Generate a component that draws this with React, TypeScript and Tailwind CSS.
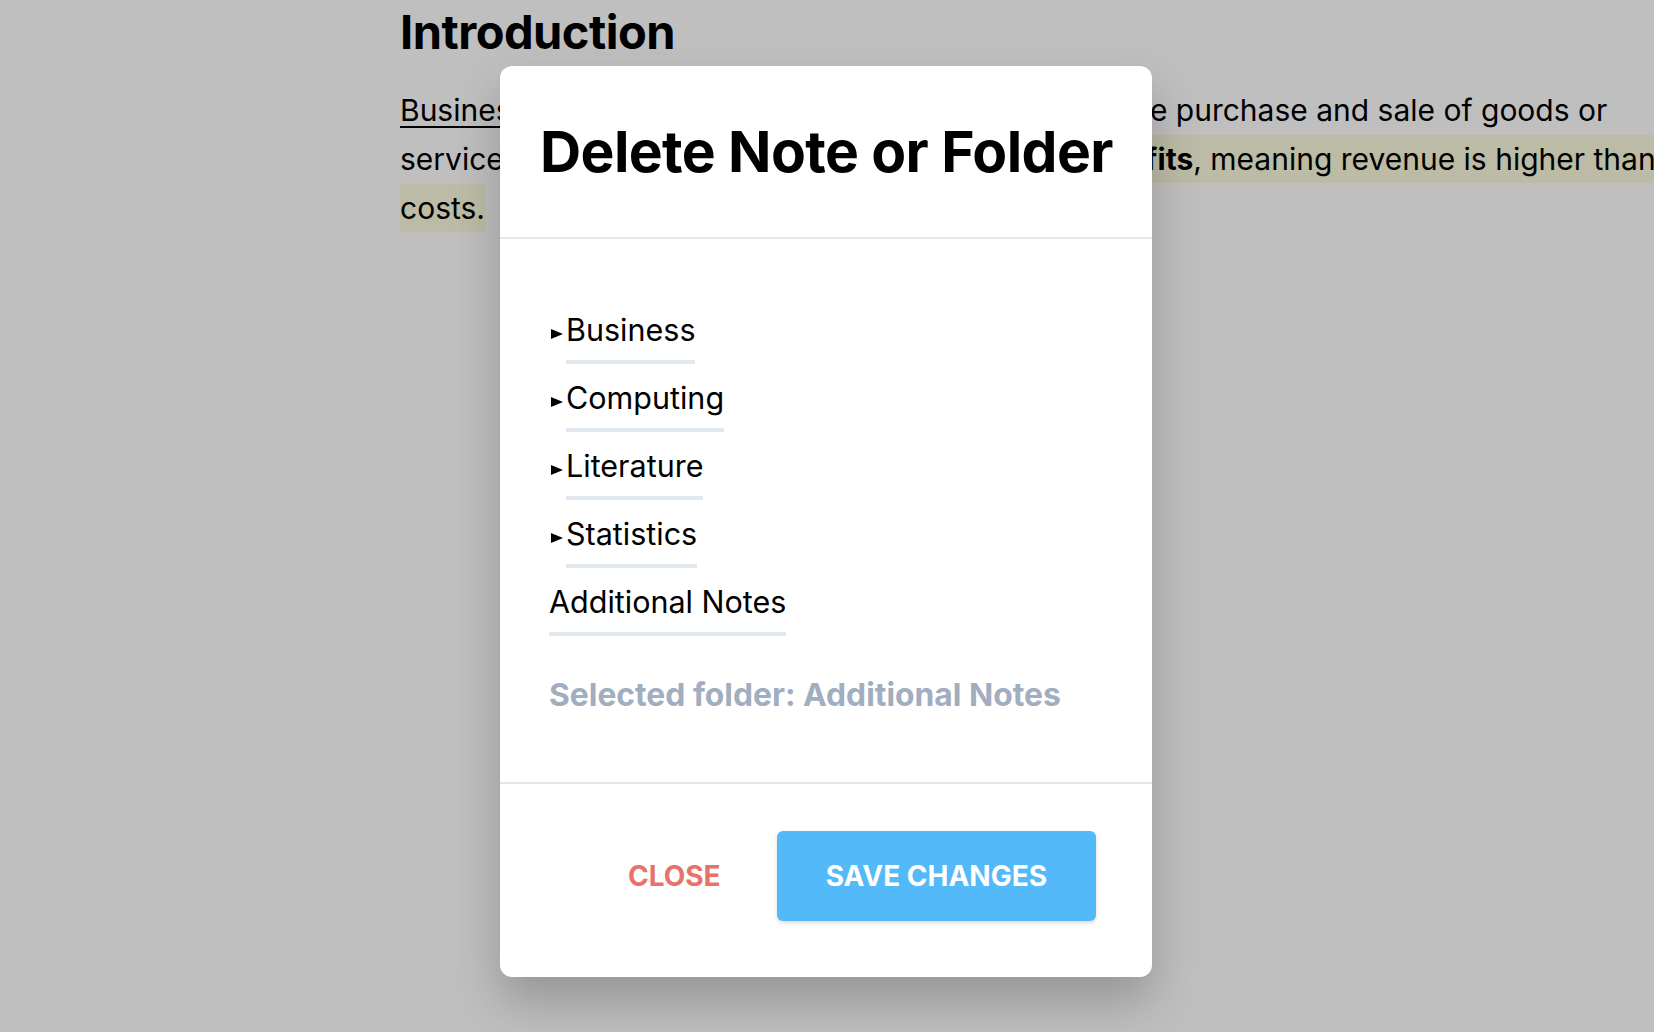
import React from "react";

const folders = ["Business", "Computing", "Literature", "Statistics"];

const Triangle = () => (
  <span className="ml-[2px] mr-[3px] flex h-[42px] w-[12px] items-end pb-[12px]">
    <svg width="12" height="10" viewBox="0 0 12 10">
      <path d="M0 0 L12 5 L0 10 Z" fill="#000" />
    </svg>
  </span>
);

const FolderRow = ({ name, nested }: { name: string; nested: boolean }) => (
  <div className="flex">
    {nested && <Triangle />}
    <span className="border-b-4 border-[#e2e8f0] pb-[9px] text-[30.5px] leading-[42px] text-black">
      {name}
    </span>
  </div>
);

export default function App() {
  return (
    <div
      className="relative h-[1032px] w-full overflow-hidden bg-[#bfbfbf] text-black"
      style={{ fontFamily: "Inter, 'Noto Sans', sans-serif" }}
    >
      {/* page behind the dialog */}
      <div className="pl-[400px] pt-[2px]">
        <h1 className="text-[47px] font-bold leading-[60px] tracking-[-0.5px]">Introduction</h1>
        <p className="mt-[24px] whitespace-nowrap text-[30px] leading-[49px]">
          <span className="underline decoration-[2px] underline-offset-[5px]">Business</span> is a human activity that typically involves the purchase and sale of goods or
          <br />
          services, with their primary objectives of making{" "}
          <span className="bg-[#bcbba5] py-[6px]">
            <b>profits</b>, meaning revenue is higher than
          </span>
          <br />
          <span className="bg-[#bcbba5] py-[6px]">costs.</span>
        </p>
      </div>

      {/* dialog */}
      <div className="absolute left-[500px] top-[66px] flex h-[911px] w-[652px] flex-col rounded-xl bg-white shadow-[0_24px_48px_rgba(0,0,0,0.22)]">
        <div className="flex h-[173px] items-center border-b-2 border-[#e2e8f0] pl-[40px]">
          <h2 className="whitespace-nowrap text-[57px] font-bold leading-[64px] tracking-[-0.6px]">
            Delete Note or Folder
          </h2>
        </div>

        <div className="flex flex-1 flex-col border-b-2 border-[#e2e8f0] pl-[49px] pt-[70px]">
          <div className="flex flex-col items-start gap-[13px]">
            {folders.map((f) => (
              <FolderRow key={f} name={f} nested />
            ))}
            <FolderRow name="Additional Notes" nested={false} />
          </div>
          <p className="mt-[38px] text-[31.8px] font-bold leading-[42px] text-[#a0aec0]">
            Selected folder: Additional Notes
          </p>
        </div>

        <div className="flex h-[193px] items-start justify-end gap-[56px] pr-[56px] pt-[47px]">
          <button className="mt-[24px] text-[28px] font-bold leading-[42px] text-[#e8716c]">CLOSE</button>
          <button className="rounded-md bg-[#54b9f8] px-[49px] py-[24px] text-[28px] font-bold leading-[42px] text-white shadow-[0_2px_4px_rgba(0,0,0,0.15)]">
            SAVE CHANGES
          </button>
        </div>
      </div>
    </div>
  );
}
